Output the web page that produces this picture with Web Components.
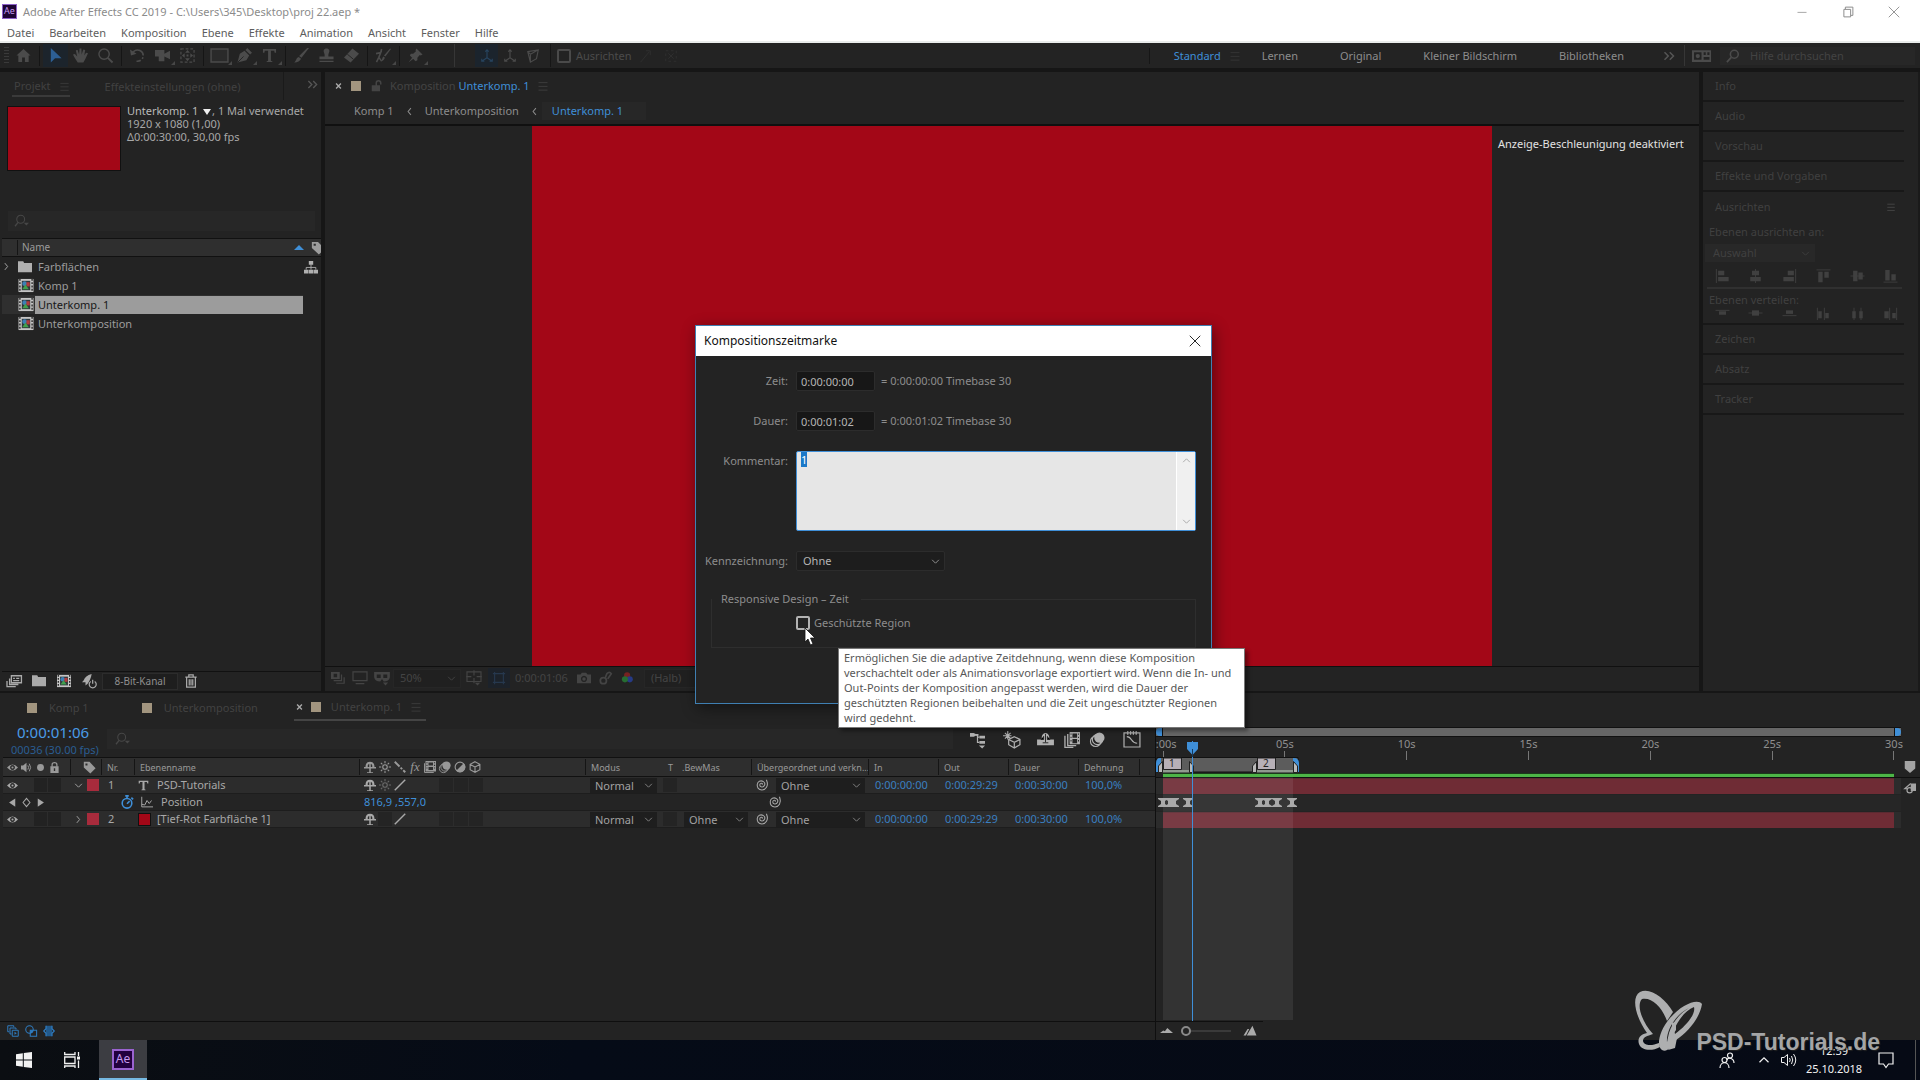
<!DOCTYPE html>
<html lang="de">
<head>
<meta charset="utf-8">
<title>Adobe After Effects CC 2019</title>
<style>
    :root {
        --bg: #232323;
        --edge: #161616;
        --dim: #4b4b4b;
        --text: #9c9c9c;
        --blue: #3f8fd8;
        --red: #a30717;
    }
    html, body { height: 100%; }
    body {
        margin: 0;
        background: var(--edge);
        color: var(--text);
        font: 11px/16px "Noto Sans", "Open Sans", sans-serif;
        overflow: hidden;
    }
</style>
</head>
<body>
<ae-app></ae-app>

<script>
const base = `
    * { box-sizing: border-box; }
    button, input, select, textarea { font: inherit; color: inherit; background: none; border: 0; padding: 0; margin: 0; border-radius: 0; outline: 0; }
    button { display: flex; align-items: center; justify-content: center; }
    a { color: inherit; text-decoration: none; }
    .pick { display: grid; align-items: center; }
    .pick select { grid-area: 1 / 1; appearance: none; width: 100%; height: 100%; }
    .pick ae-icon { grid-area: 1 / 1; justify-self: end; pointer-events: none; }
`;

function define(name, html, ready) {
    const template = document.createElement('template');
    template.innerHTML = html.replace('<style>', '<style>' + base);
    customElements.define(name, class extends HTMLElement {
        constructor() {
            super();
            this.attachShadow({ mode: 'open' });
            this.shadowRoot.appendChild(template.content.cloneNode(true));
        }
        connectedCallback() {
            if (ready) ready(this.shadowRoot, this);
        }
    });
}

/* ---------- icons, all on a 16 x 16 grid ---------- */
const L = 'fill="none" stroke="currentColor"';
const F = 'fill="currentColor"';
const icons = {
    home: `<path ${F} d="M8 1 0.500 8H2.500V15H6.500V10H9.500V15H13.500V8H15.500Z"/>`,
    arrow: `<path ${F} d="M3 0V15.500L7.500 11H14.500Z"/>`,
    hand: `<path ${F} d="M5 15.500 1 9 0 7 2 6.500 4.500 9 3 2.500 5 2 6.500 7 7 0.500H9L9.200 7 11 1.500 13 2 12 8 14 5 16 5.500 13 12 11 15.500Z"/>`,
    zoom: `<circle ${L} stroke-width="1.500" cx="6.500" cy="6.500" r="5.500"/><path ${L} stroke-width="2" d="M10.500 10.500 15.500 15.500"/>`,
    rotate: `<path ${L} stroke-width="1.700" d="M3 5A6 6 0 1 1 7 14" stroke-dasharray="15 2 2 2"/><path ${F} d="M0 1.500 1 8 7 6Z"/>`,
    camera: `<path ${F} d="M0 2H10V6L16 3V12L10 9V14H4V9H0Z"/>`,
    pan: `<path ${L} stroke-width="1.300" stroke-dasharray="3 2" d="M1 1H15V15H1Z"/><path ${F} d="M8 2 10.500 5H5.500ZM8 14 5.500 11H10.500ZM2 8 5 5.500V10.500ZM14 8 11 10.500V5.500ZM7 7H9V9H7Z"/>`,
    rect: `<path fill="#2a2a2a" stroke="currentColor" stroke-width="1.500" d="M-1 1H17V15H-1Z"/>`,
    pen: `<path ${F} d="M0.500 15.500 3 6 8 3 13 8 10 13ZM9 2 11 0 16 5 14 7Z"/><path stroke="#232323" d="M1 15 7 9"/>`,
    type: `<path ${F} d="M1 1H15V5H13.500L13 3H9.500V13.500L11 14V15H5V14L6.500 13.500V3H3L2.500 5H1Z"/>`,
    brush: `<path ${F} d="M16 0 8 10.500 5.500 8.500 14 0ZM5 9.500 7.500 11.500C6.500 14 4 15.500 0 15.500 2.500 14 2 10.500 5 9.500Z"/>`,
    stamp: `<path ${F} d="M6 9C6.500 6 4.500 5 5 2.500 6 0 10 0 11 2.500 11.500 5 9.500 6 10 9H15.500V12H0.500V9ZM0.500 13.500H15.500V15H0.500Z"/>`,
    eraser: `<path ${F} d="M9 0.500 16 6 7 15.500 0 10Z"/><path stroke="#232323" d="M3.500 6.500 10 12"/>`,
    roto: `<path ${F} d="M16 1 10 9 8.500 8 15 0.500ZM8 9 9.500 10.500C8.500 13 7.500 14 5 14.500 6.500 13 6.500 10 8 9Z"/><path ${L} stroke-width="1.700" d="M0 6 5 5 3 10 0.500 15M5 5 6 1M3 10 6 14"/>`,
    pin: `<path ${F} d="M9 0.500 15.500 7 13.500 8 12.500 7.500 10 10.500 10 13 8 14 2 8 3 6 5.500 6 8.500 3.500 8 2.500ZM5 9.500 6.500 11 0.500 15.500Z"/>`,
    axis: `<path ${L} stroke-width="1.300" d="M8 1V10M8 10 2 14M8 10 14 14M6 3 8 1 10 3M2 11V14H5M14 11V14H11"/>`,
    axisview: `<path ${L} stroke-width="1.300" d="M2 3 14 1 12 11 5 15ZM2 3 5 6 14 1M5 6V15"/>`,
    snap: `<path ${L} d="M3 15 13 3M9 2H14V7"/>`,
    snapbox: `<path ${L} stroke-dasharray="3 3" d="M2 2H14V14H2Z"/><path ${L} d="M5 5 11 11M11 5 5 11"/>`,
    menu: `<path ${L} d="M2 3.500H14M2 8.500H14M2 13.500H14"/>`,
    more: `<path ${L} stroke-width="2" d="M2 3 7 8 2 13M9 3 14 8 9 13"/>`,
    search: `<circle ${L} stroke-width="1.800" cx="9.500" cy="6" r="4.500"/><path ${L} stroke-width="2" d="M6 9.500 1 15"/>`,
    find: `<circle ${L} stroke-width="1.200" cx="6.500" cy="6" r="4.500"/><path ${L} stroke-width="1.500" d="M3.500 9.500 0 14"/><path ${F} d="M10 10H16L13 13Z"/>`,
    cards: `<path ${F} fill-rule="evenodd" d="M-1 3H17V14H-1ZM1 5V12H8V5ZM10 5V7.500H12V5ZM13.500 5V7.500H15.500V5ZM10 9.500V12H15.500V9.500Z"/><circle ${F} cx="4.500" cy="8.500" r="2"/>`,
    down: `<path ${L} stroke-width="1.600" d="M2 5 8 11 14 5"/>`,
    up: `<path ${L} stroke-width="1.600" d="M2 11 8 5 14 11"/>`,
    right: `<path ${L} stroke-width="1.600" d="M5 2 10 8 5 14"/>`,
    left: `<path ${L} stroke-width="1.800" d="M10.500 2 5.500 8 10.500 14"/>`,
    cross: `<path ${L} stroke-width="1.200" d="M1 1 15 15M15 1 1 15"/>`,
    smallx: `<path ${L} stroke-width="2" d="M4.500 4.500 11.500 11.500M11.500 4.500 4.500 11.500"/>`,
    minimize: `<path ${L} d="M2 8.500H14"/>`,
    restore: `<path ${L} stroke-width="1.300" d="M2.500 4.500H11.500V14.500H2.500ZM4.500 4V1.500H14.500V12.500H12"/>`,
    lock: `<path ${F} d="M1 7H12V15H1Z"/><path ${L} stroke-width="2" d="M7 8V4A3 3 0 0 1 13 4V6"/>`,
    padlock: `<path ${F} fill-rule="evenodd" d="M2 6H14V16H2ZM7 9V13H9V9Z"/><path ${L} stroke-width="1.800" d="M4.500 7V4A3.500 3 0 0 1 11.500 4V7"/>`,
    folder: `<path ${F} d="M0 1.500H6L7 3.500H16V14H0Z"/>`,
    comp: `<path fill="#c4c4c4" d="M0 1H16V15H0Z"/><path stroke="#2b2b2b" stroke-width="1.500" stroke-dasharray="2 1.500" d="M1.500 1V15M14.500 1V15"/><path fill="#30383b" d="M3.500 3H12.500V13H3.500Z"/><circle fill="#3c7fb5" cx="6.500" cy="6" r="2.500"/><path fill="#b23a3d" d="M8.500 4.500H12V9H8.500Z"/><path fill="#41a04d" d="M7.500 7 11 12H4Z"/>`,
    tag: `<path ${F} fill-rule="evenodd" d="M1 1H8L15.500 9 9 15.500 1 8ZM3 3V5.500H5.500V3Z"/>`,
    tree: `<path ${F} d="M5.500 1H10.500V5.500H5.500ZM0 11H5V15.500H0ZM5.500 11H10.500V15.500H5.500ZM11 11H16V15.500H11Z"/><path ${L} d="M8 5V11M2.500 11V8.500H13.500V11"/>`,
    footage: `<path ${L} stroke-width="1.500" d="M5 2H16.500V10H5ZM3 5V12H13M0 8V14.500H10"/><path ${L} stroke-width="1.500" d="M7 5H9M10.500 5H14M7 7.500H14"/>`,
    rocket: `<path ${F} d="M11 0C6 1 3 4 2 7L0 9.500H4V13L6.500 11C8 9 10.500 5 11 0Z"/><path ${L} stroke-width="1.400" d="M10 8.500A4 4 0 1 0 14.500 8.500M12.200 6.500V11"/>`,
    trash: `<path ${L} stroke-width="1.400" d="M1.500 3.500H14.500M5.500 3V1H10.500V3M3 4V15H13V4M6 6V13M8 6V13M10 6V13"/>`,
    stack: `<path ${F} fill-rule="evenodd" d="M0 1H10V9H0ZM3 3V7H7V3Z"/><path ${L} stroke-width="1.400" d="M12 4V11H3M15 7V14H6"/>`,
    monitor: `<path ${L} stroke-width="1.400" d="M0 1H16V11H0ZM3 14.500H13"/>`,
    mask: `<path ${F} fill-rule="evenodd" d="M-1 1H17V7Q16 12 10 12L8 9 6 12Q0 12-1 7ZM2 4V8H6.500V4ZM9.500 4V8H14V4Z"/><path ${F} d="M9 13H15L12 16.500Z"/>`,
    guides: `<path ${L} stroke-width="1.300" d="M0 1H16V12H0ZM8-1V5M8 8V14M-1 6.500H5M11 6.500H17"/><path ${F} d="M9 13.500H15L12 16.500Z"/>`,
    region: `<path ${L} stroke-width="1.300" d="M3 1V15M13 1V15M1 3H15M1 13H15"/>`,
    photo: `<path ${F} fill-rule="evenodd" d="M0 4H4L5.500 2H10.500L12 4H16V14H0ZM8 5.500A3.500 3.500 0 1 0 8.010 5.500Z"/><circle ${F} cx="8" cy="9" r="2"/>`,
    show: `<circle ${L} stroke-width="2" cx="5" cy="11" r="3.500"/><path ${L} stroke-width="2" d="M7 8 9 3Q12 0 14 3L10 9"/>`,
    rgb: `<circle fill="#722" cx="7" cy="5" r="3.500"/><circle fill="#263a85" cx="10" cy="9.500" r="3.500"/><circle fill="#266d32" cx="4.500" cy="9.500" r="3.500"/>`,
    eye: `<path ${F} fill-rule="evenodd" d="M0 8Q8-1 16 8 8 17 0 8ZM8 4.500A3.500 3.500 0 1 0 8.010 4.500Z"/><circle ${F} cx="8" cy="8" r="1.500"/>`,
    sound: `<path ${F} d="M0 5H3L8 1V15L3 11H0Z"/><path ${L} stroke-width="1.400" d="M10 5Q12 8 10 11M12 2.500Q16 8 12 13.500"/>`,
    dot: `<circle ${F} cx="8" cy="8" r="5"/>`,
    shy: `<path ${F} fill-rule="evenodd" d="M2 8Q2 1 8 1T14 8H16V10H9V15H12V16H4V15H7V10H0V8ZM5 6V8H7V4Q5 4 5 6ZM9 4V8H11V6Q11 4 9 4Z"/>`,
    sun: `<circle ${L} stroke-width="1.500" cx="8" cy="8" r="3"/><path ${L} stroke-width="1.400" d="M8 0V3M8 13V16M0 8H3M13 8H16M2.500 2.500 4.500 4.500M11.500 11.500 13.500 13.500M13.500 2.500 11.500 4.500M4.500 11.500 2.500 13.500"/>`,
    backslash: `<path ${L} stroke-width="2.500" d="M1 1 15 15" stroke-dasharray="9 2 3 2"/>`,
    slash: `<path ${L} stroke-width="2" d="M1 15 15 1"/>`,
    film: `<path ${F} fill-rule="evenodd" d="M2 0H16V14H2ZM6 2V6H12V2ZM6 8V12H12V8ZM3.200 1.500V3H4.700V1.500ZM3.200 5V6.500H4.700V5ZM3.200 8.500V10H4.700V8.500ZM13.300 1.500V3H14.800V1.500ZM13.300 5V6.500H14.800V5ZM13.300 8.500V10H14.800V8.500Z"/><path ${L} stroke-width="1.300" d="M0.700 3V15.300H13"/>`,
    frames: `<path ${F} fill-rule="evenodd" d="M6 0H17V13H6ZM9 1.500V6H14V1.500ZM9 7.500V12H14V7.500ZM7 1.500V3H8V1.500ZM7 5V6.500H8V5ZM7 8.500V10H8V8.500ZM15 1.500V3H16V1.500ZM15 5V6.500H16V5ZM15 8.500V10H16V8.500Z"/><path ${L} stroke-width="1.400" d="M4 2V14.500H13M1 4V16.300H10"/>`,
    blur: `<circle ${F} cx="10" cy="6" r="5.500"/><circle ${L} stroke-width="1.200" cx="8" cy="8" r="5.500"/><circle ${L} stroke-width="1.200" cx="6" cy="10" r="5.500"/>`,
    adjust: `<circle ${L} stroke-width="1.500" cx="8" cy="8" r="6.500"/><path ${F} d="M13 3 3 13A7 7 0 0 0 13 3Z"/>`,
    cube: `<path ${L} stroke-width="1.500" d="M8 1 14.500 4.500V11.500L8 15 1.500 11.500V4.500ZM1.500 4.500 8 8 14.500 4.500M8 8V15"/>`,
    whip: `<path ${L} stroke-width="1.400" d="M8 7.500C10 5 5 5 5 8S10 12 11.500 8 8 1.500 4.500 3 1 10 3 12.500 11 16 14 11 14 3 14 1"/>`,
    watch: `<circle ${L} stroke-width="1.800" cx="8" cy="9.500" r="5.500"/><path ${L} stroke-width="1.800" d="M6 1H10M8 1V4M13 3 15 5M8 10 11 7"/>`,
    graph: `<path ${L} stroke-width="1.300" d="M1 1V14.500H16M1 11 5 12 8 6 11 10 14 6"/>`,
    prev: `<path ${F} d="M12 2V14L3 8Z"/>`,
    next: `<path ${F} d="M4 2V14L13 8Z"/>`,
    diamond: `<path ${L} stroke-width="1.500" d="M8 2 13 8 8 14 3 8Z"/>`,
    flow: `<path ${F} d="M0 1H4L6 2H9V4H6L4 5H0ZM10 4H16V7H10ZM10 9.500H16V12.500H10ZM9.500 14.500H16L13 17.500Z"/><path ${L} stroke-width="1.300" d="M6 3H8V11H10M8 5.500H10"/>`,
    draft: `<path ${L} stroke-width="1.300" d="M11 5 17 8V13.500L11 17 5 13.500V8ZM5 8 11 11 17 8M11 11V17"/><path ${L} stroke-width="1.200" d="M4-1V8M-1 4H8M1 1 7 7M7 1 1 7"/>`,
    hideshy: `<path ${F} d="M-1 8H4V5Q5 1 8 1T12 5V8H17V14H-1Z"/><path stroke="#232323" d="M6 4.500V8H3M10 4.500V8H13M8 2V11M5 11.500H11"/>`,
    grapher: `<path ${L} stroke-width="1.300" d="M0 1H17V16H0ZM3 5C9 5 7 12 14 12M4-1V3M7-1V3M10-1V3M13-1V3"/>`,
    switches: `<path ${L} stroke-width="1.300" d="M1 1H9V3M1 1V9H3M4 4H12V6M4 4V12H6M7 7H15V15H7Z"/><path ${F} d="M10 9 13 11 10 13Z"/>`,
    modes: `<circle ${L} stroke-width="1.400" cx="6" cy="6" r="5"/><path ${L} stroke-width="1.400" d="M7 7H15.500V15H7Z"/><path ${F} d="M7 7H11Q11 11 7 11Z"/>`,
    inout: `<path fill="#225a8c" d="M4 1H12V15H4Z"/><path ${L} stroke-width="1.600" d="M4 1V5L1 8 4 11V15M12 1V5L15 8 12 11V15"/>`,
    shield: `<path ${F} d="M1 0H15V10L8 16 1 10Z"/>`,
    bin: `<path ${F} d="M9 2H16V12H9Z"/><circle ${L} stroke-width="1.600" cx="7.500" cy="11" r="3.500"/><path ${L} stroke-width="1.600" d="M9 2 1 9H5"/>`,
    hillsmall: `<path ${F} d="M0 11 4 8 6 9 9 5 16 11Z"/>`,
    hillbig: `<path ${F} d="M0 14 5 6 7 6 3 14ZM4 14 11 2 16 14Z"/>`,
    win: `<path ${F} d="M0 2.300 6.800 1.300V7.600H0ZM7.800 1.100 16 0V7.600H7.800ZM0 8.600H6.800V14.800L0 13.800ZM7.800 8.600H16V16L7.800 15Z"/>`,
    tasks: `<path ${L} stroke-width="1.300" d="M0.700 5H11V11.500H0.700ZM0.700 0V2.500H11V0M0.700 16V14H11V16M14.500 0V4M14.500 8.500V16"/><path ${F} d="M13 4.500H16V7.500H13Z"/>`,
    people: `<circle ${L} stroke-width="1.200" cx="11" cy="3.500" r="2.500"/><path ${L} stroke-width="1.200" d="M15 11C15 6 9 5 8 8"/><circle ${L} stroke-width="1.200" cx="5.500" cy="8" r="2.500"/><path ${L} stroke-width="1.200" d="M1 16C1 9 10 9 10 16"/>`,
    speaker: `<path ${L} d="M0.500 5.500H3L6.500 2.500V13.500L3 10.500H0.500ZM8.500 6Q10 8 8.500 10M10.500 4Q13 8 10.500 12M12.500 2Q17 8 12.500 14"/>`,
    note: `<path ${L} stroke-width="1.200" d="M1 1H15V12H10.500L8 15.500 5.500 12H1Z"/>`,
    alignl: `<path ${L} d="M1 0V16"/><path ${F} d="M3 2H10V7H3ZM3 9H15V14H3Z"/>`,
    alignc: `<path ${L} d="M8 0V16"/><path ${F} d="M4 2H12V7H4ZM2 9H14V14H2Z"/>`,
    alignr: `<path ${L} d="M15 0V16"/><path ${F} d="M6 2H13V7H6ZM1 9H13V14H1Z"/>`,
    alignt: `<path ${L} d="M0 1H16"/><path ${F} d="M2 3H7V15H2ZM9 3H14V10H9Z"/>`,
    alignm: `<path ${L} d="M0 8H16"/><path ${F} d="M3 2H8V14H3ZM9 4H14V12H9Z"/>`,
    alignb: `<path ${L} d="M0 15H16"/><path ${F} d="M2 1H7V13H2ZM9 6H14V13H9Z"/>`,
    distt: `<path ${L} d="M0 5H16"/><path ${F} d="M4 6H12V10H4Z"/>`,
    distm: `<path ${L} d="M0 8H16"/><path ${F} d="M4 5H12V11H4Z"/>`,
    distb: `<path ${L} d="M0 11H16"/><path ${F} d="M4 5H12V9H4Z"/>`,
    distl: `<path ${L} d="M1 2V16M9 2V16"/><path ${F} d="M2 6H6V14H2ZM10 8H14V14H10Z"/>`,
    distc: `<path ${L} d="M4 2V16M12 2V16"/><path ${F} d="M2 6H6V14H2ZM10 6H14V14H10Z"/>`,
    distr: `<path ${L} d="M7 2V16M15 2V16"/><path ${F} d="M1 6H6V14H1ZM10 8H14V14H10Z"/>`
};

customElements.define('ae-icon', class extends HTMLElement {
    constructor() {
        super();
        this.attachShadow({ mode: 'open' });
    }
    connectedCallback() {
        this.shadowRoot.innerHTML = `
            <style>
                :host { display: block; flex: none; width: 14px; height: 14px; }
                svg { display: block; width: 100%; height: 100%; overflow: visible; }
            </style>
            <svg viewBox="0 0 16 16" aria-hidden="true">${icons[this.getAttribute('name')]}</svg>`;
    }
});

const tool = (name, cls = '') => `<button class="${cls}" aria-label="${name}"><ae-icon name="${name}"></ae-icon></button>`;

/* ---------- product badge ---------- */
define('ae-badge', `
    <style>
        :host { display: block; box-sizing: border-box; width: 15px; height: 15px; border: 1px solid #8d62c9; background: #1d0535; color: #c79cf0; font-size: 9px; line-height: 12px; text-align: center; overflow: hidden; }
        :host([big]) { width: 22px; height: 21px; border: 2px solid #9a63d0; background: #22003f; font-size: 12px; line-height: 16px; }
    </style>Ae`);

/* ---------- window title and menus ---------- */
define('window-bar', `
    <style>
        :host { display: block; background: #fff; color: #8b8b8b; border-bottom: 2px solid #e9eceb; }
        header { display: flex; align-items: center; height: 23px; padding: 0 3px 0 2px; }
        header span { flex: 1; margin-left: 6px; }
        header button { width: 46px; height: 22px; }
        header button ae-icon { width: 12px; height: 12px; }
        nav { display: flex; gap: 15px; padding: 2px 7px 0; color: #5d5d5d; }
    </style>
    <header>
        <ae-badge></ae-badge><span>Adobe After Effects CC 2019 - C:\\Users\\345\\Desktop\\proj 22.aep *</span>
        ${tool('minimize')}${tool('restore')}${tool('cross')}
    </header>
    <nav><a href="#">Datei</a><a href="#">Bearbeiten</a><a href="#">Komposition</a><a href="#">Ebene</a><a href="#">Effekte</a><a href="#">Animation</a><a href="#">Ansicht</a><a href="#">Fenster</a><a href="#">Hilfe</a></nav>`);

/* ---------- tools and workspaces ---------- */
define('tool-bar', `
    <style>
        :host { display: flex; align-items: center; height: 25px; background: var(--bg); color: #4b4b4b; }
        .grip { width: 5px; height: 18px; margin: 0 2px 0 4px; background: repeating-linear-gradient(#3a3a3a 0 1px, transparent 1px 3px); }
        .tools, .axes, .snap { display: flex; align-items: center; }
        .tools button { width: 25px; height: 23px; }
        .tools button ae-icon { width: 15px; height: 15px; }
        .tools i { width: 1px; height: 20px; margin: 0 3px; background: #151515; }
        .tools .on { background: #1c242c; color: #2d5f94; }
        .sub { position: relative; }
        .sub::after { content: ""; position: absolute; right: 0; bottom: 2px; border: 2px solid transparent; border-right-color: #474747; border-bottom-color: #474747; }
        .axes { margin-left: 26px; border-left: 1px solid #363636; padding-left: 20px; }
        .axes button { width: 23px; height: 23px; }
        .axes .on { background: #1b242d; color: #27445f; }
        .snap { margin-left: 6px; padding-left: 6px; border-left: 1px solid #161616; flex: 1; }
        .snap input { appearance: none; width: 14px; height: 14px; border: 2px solid #4a4a4a; border-radius: 2px; margin-right: 5px; }
        .snap button { width: 26px; height: 23px; color: #303030; }
        nav { display: flex; align-items: center; color: #8d8d8d; border-left: 1px solid #161616; padding-left: 24px; }
        nav .on { color: var(--blue); width: 55px; }
        nav ae-icon { width: 12px; height: 12px; color: #3a3a3a; }
        nav a + a { margin-left: 42px; }
        nav ae-icon + a { margin-left: 21px; }
        nav .more { margin: 0 9px 0 39px; width: 12px; color: #555; }
        nav .more ae-icon { color: #555; }
        .sync { width: 20px; height: 21px; border-left: 1px solid #363636; padding-left: 6px; box-sizing: content-box; margin-right: 9px; }
        .sync ae-icon { width: 17px; height: 17px; }
        .search { display: flex; align-items: center; gap: 10px; width: 195px; height: 18px; padding-left: 6px; background: #272727; margin-right: 5px; }
        .search input { width: 140px; }
        .search input::placeholder { color: #434343; opacity: 1; }
    </style>
    <div class="grip"></div>
    <div class="tools">
        ${tool('home')}<i></i>${tool('arrow', 'on')}${tool('hand')}${tool('zoom')}<i></i>
        ${tool('rotate')}${tool('camera', 'sub')}${tool('pan')}<i></i>
        ${tool('rect', 'sub')}${tool('pen', 'sub')}${tool('type', 'sub')}<i></i>
        ${tool('brush')}${tool('stamp')}${tool('eraser')}<i></i>
        ${tool('roto', 'sub')}<i></i>${tool('pin', 'sub')}
    </div>
    <div class="axes">${tool('axis', 'on')}${tool('axis')}${tool('axisview')}</div>
    <div class="snap"><input type="checkbox" id="snap"><label for="snap">Ausrichten</label>${tool('snap')}${tool('snapbox')}</div>
    <nav>
        <a href="#" class="on">Standard</a><ae-icon name="menu"></ae-icon>
        <a href="#">Lernen</a><a href="#">Original</a><a href="#">Kleiner Bildschirm</a><a href="#">Bibliotheken</a>
        ${tool('more', 'more')}
    </nav>
    ${tool('cards', 'sync')}
    <label class="search"><ae-icon name="search"></ae-icon><input type="text" placeholder="Hilfe durchsuchen" aria-label="Hilfe durchsuchen"></label>`);

/* ---------- project panel ---------- */
define('project-panel', `
    <style>
        :host { display: flex; flex-direction: column; background: var(--bg); padding-left: 2px; }
        .tabs { display: flex; align-items: center; height: 28px; color: #414141; white-space: nowrap; }
        .tabs a { padding: 3px 0 1px; }
        .tabs a:first-child { display: flex; align-items: center; gap: 8px; margin-left: 10px; padding-left: 2px; border-bottom: 2px solid #3a3a3a; }
        .tabs a + a { margin-left: 35px; }
        .tabs ae-icon { width: 11px; height: 11px; }
        .tabs .more { margin-left: auto; padding: 0 3px 4px 23px; height: 28px; border-left: 1px solid #1a1a1a; color: #555; }
        .info { display: flex; gap: 6px; padding: 6px 5px; height: 110px; }
        .thumb { width: 114px; height: 65px; background: var(--red); border: 1px solid #111; }
        .info p { margin: -2px 0 0; line-height: 13px; color: #a8a8a8; white-space: nowrap; }
        .info b { font-weight: 400; color: #b9b9b9; }
        .info i { display: inline-block; border: 4px solid transparent; border-top: 6px solid #eee; border-bottom: 0; margin: 0 1px 0 2px; }
        .find { display: flex; align-items: center; gap: 6px; height: 20px; margin: 1px 6px 7px 6px; padding-left: 7px; background: #272727; color: #474747; }
        .head { display: grid; grid-template-columns: 15px 1fr 17px 10px; align-items: center; height: 19px; background: #2f2f2f; border: solid #111; border-width: 1px 0; }
        .head span { border-left: 1px solid #151515; padding-left: 4px; line-height: 15px; font-size: 10px; }
        .head i { border: 5px solid transparent; border-top: 0; border-bottom: 5px solid var(--blue); width: 10px; }
        .head { overflow: hidden; }
        ul { margin: 0; padding: 0; list-style: none; flex: 1; }
        li { display: grid; grid-template-columns: 16px 17px 1fr 17px; height: 19px; align-items: center; }
        li span { padding-left: 3px; line-height: 18px; }
        li > ae-icon:first-child { width: 9px; height: 9px; }
        li ae-icon { color: #b0b0b0; }
        li ae-icon[name=comp] { width: 16px; height: 15px; }
        .on { background: #2f2f2f; margin-right: 18px; grid-template-columns: 16px 17px 1fr; }
        .on span { background: #9c9c9c; color: #171717; }
        footer { display: flex; align-items: center; height: 20px; padding-bottom: 1px; border-top: 1px solid #111; color: #aaa; }
        footer button { width: 25px; }
        footer button:first-child { width: 24px; }
        footer .depth { width: 76px; height: 17px; margin-left: 1px; background: #1e1e1e; border: 1px solid #2c2c2c; font-size: 10px; color: #8f8f8f; }
    </style>
    <div class="tabs"><a href="#">Projekt<ae-icon name="menu"></ae-icon></a><a href="#">Effekteinstellungen (ohne)</a>${tool('more', 'more')}</div>
    <div class="info">
        <div class="thumb"></div>
        <p><b>Unterkomp. 1 <i></i></b>, 1 Mal verwendet<br>1920 x 1080 (1,00)<br>Δ0:00:30:00, 30,00 fps</p>
    </div>
    <div class="find"><ae-icon name="find"></ae-icon><input type="text" aria-label="Projekt durchsuchen"></div>
    <div class="head"><b></b><span>Name</span><i></i><ae-icon name="tag"></ae-icon></div>
    <ul>
        <li><ae-icon name="right"></ae-icon><ae-icon name="folder"></ae-icon><span>Farbflächen</span><ae-icon name="tree"></ae-icon></li>
        <li><b></b><ae-icon name="comp"></ae-icon><span>Komp 1</span></li>
        <li class="on"><b></b><ae-icon name="comp"></ae-icon><span>Unterkomp. 1</span></li>
        <li><b></b><ae-icon name="comp"></ae-icon><span>Unterkomposition</span></li>
    </ul>
    <footer>${tool('footage')}${tool('folder')}${tool('comp')}${tool('rocket')}<button class="depth">8-Bit-Kanal</button>${tool('trash')}</footer>`);

/* ---------- composition viewer ---------- */
define('comp-viewer', `
    <style>
        :host { display: flex; flex-direction: column; background: var(--bg); min-width: 0; }
        .tabs, .path, footer { display: flex; align-items: center; color: #444; }
        .tabs { height: 28px; padding-left: 8px; gap: 7px; }
        .tabs ae-icon { width: 12px; height: 12px; }
        .tabs ae-icon[name=smallx] { color: #aaa; width: 11px; }
        .tabs i { width: 10px; height: 10px; background: #a2957f; }
        .tabs em { font-style: normal; color: var(--blue); }
        .tabs ae-icon[name=lock] { margin: 0 0 0 3px; }
        .path { height: 24px; padding: 0 0 2px 29px; color: #8d8d8d; }
        .path ae-icon { width: 9px; height: 9px; margin: 0 11px; }
        .path .on { width: 104px; margin-left: -8px; padding-left: 10px; line-height: 18px; background: #272727; color: var(--blue); }
        .stage { display: grid; grid-template-columns: 1fr auto 1fr; flex: 1; min-height: 0; border-top: 2px solid #101010; border-bottom: 1px solid #101010; }
        .canvas { grid-column: 2; height: 100%; aspect-ratio: 16 / 9; background: var(--red); }
        .stage p { margin: 10px 0 0 6px; color: #e2e2e2; white-space: nowrap; }
        footer { height: 24px; padding: 0 0 2px 2px; }
        footer button { width: 22px; height: 20px; }
        .pick { width: 68px; height: 19px; margin-right: 2px; background: #202020; border: 1px solid #262626; }
        .pick select { padding-left: 6px; }
        .pick ae-icon { width: 9px; height: 9px; margin-right: 4px; }
        .region { background: #1c222a; color: #26384e; margin: 0 5px 0 3px; }
        .time { width: auto; margin-right: 5px; }
        .res { margin-left: 5px; padding-left: 0; }
    </style>
    <div class="tabs"><ae-icon name="smallx"></ae-icon><i></i><ae-icon name="lock"></ae-icon><a href="#">Komposition <em>Unterkomp. 1</em></a><ae-icon name="menu"></ae-icon></div>
    <div class="path"><a href="#">Komp 1</a><ae-icon name="left"></ae-icon><a href="#">Unterkomposition</a><ae-icon name="left"></ae-icon><a href="#" class="on">Unterkomp. 1</a></div>
    <div class="stage"><div class="canvas"></div><p>Anzeige-Beschleunigung deaktiviert</p></div>
    <footer>
        ${tool('stack')}${tool('monitor')}${tool('mask')}
        <div class="pick"><select aria-label="Vergrößerung"><option>50%</option></select><ae-icon name="down"></ae-icon></div>
        ${tool('guides')}${tool('region', 'region')}<button class="time">0:00:01:06</button>
        ${tool('photo')}${tool('show')}${tool('rgb')}
        <div class="pick res"><select aria-label="Auflösung"><option>(Halb)</option></select><ae-icon name="down"></ae-icon></div>
    </footer>`);

/* ---------- collapsed panels on the right ---------- */
define('side-panels', `
    <style>
        :host { display: block; background: var(--bg); color: #404040; padding-right: 14px; border-right: 2px solid #1a1a1a; }
        h2 { display: flex; align-items: center; justify-content: space-between; margin: 0; height: 30px; padding: 0 8px 0 12px; font: inherit; border-bottom: 2px solid #181818; }
        h2.open { border: 0; }
        h2 ae-icon { width: 10px; height: 10px; color: #555; }
        .align { padding: 2px 0 0; height: 103px; border-bottom: 2px solid #181818; overflow: hidden; }
        .align > span, label { display: block; padding-left: 6px; }
        .pick { width: 110px; height: 18px; margin: 4px 0 6px 2px; background: #282828; }
        .pick select { padding-left: 8px; }
        .pick ae-icon { width: 9px; height: 9px; margin-right: 5px; }
        .row { display: flex; justify-content: space-between; padding: 0 4px 3px 10px; }
        .row button { width: 18px; height: 16px; }
        .row ae-icon { width: 15px; }
        .row + span { border-top: 2px solid #303030; margin: 0 2px 0 4px; padding: 3px 0 0 2px; }
        .row:last-child { margin-top: -3px; }
    </style>
    <h2>Info</h2><h2>Audio</h2><h2>Vorschau</h2><h2>Effekte und Vorgaben</h2>
    <h2 class="open">Ausrichten<ae-icon name="menu"></ae-icon></h2>
    <div class="align">
        <label for="to">Ebenen ausrichten an:</label>
        <div class="pick"><select id="to"><option>Auswahl</option></select><ae-icon name="down"></ae-icon></div>
        <div class="row">${['alignl', 'alignc', 'alignr', 'alignt', 'alignm', 'alignb'].map(n => tool(n)).join('')}</div>
        <span>Ebenen verteilen:</span>
        <div class="row">${['distt', 'distm', 'distb', 'distl', 'distc', 'distr'].map(n => tool(n)).join('')}</div>
    </div>
    <h2>Zeichen</h2><h2>Absatz</h2><h2>Tracker</h2>`);

/* ---------- layer table ---------- */
const drop = (label, value) => `<div class="pick"><select aria-label="${label}"><option>${value}</option></select><ae-icon name="down"></ae-icon></div>`;
const times = '<td class="num">0:00:00:00</td><td class="num">0:00:29:29</td><td class="num">0:00:30:00</td><td class="num">100,0%</td><td></td>';

define('layer-table', `
    <style>
        :host { display: block; padding-left: 3px; }
        table { width: 100%; table-layout: fixed; border-collapse: collapse; }
        th, td { padding: 0; font-weight: 400; text-align: left; height: 17px; line-height: 16px; white-space: nowrap; border-bottom: 1px solid #1d1d1d; }
        thead th { height: 19px; font-size: 9px; line-height: 17px; background: #2e2e2e; border: solid #111; border-width: 1px 0; }
        thead th + th > * { border-left: 1px solid #151515; padding-left: 5px; overflow: hidden; }
        tr { background: #2c2c2c; }
        tr.prop { background: #242424; }
        div { display: flex; align-items: center; height: 16px; color: #a8a8a8; }
        thead div { color: #999; }
        .av { gap: 1px; padding-left: 3px; }
        .av ae-icon { width: 13px; height: 11px; }
        .av i { width: 13px; height: 14px; background: #222; }
        .av u { width: 13px; }
        .lab { justify-content: flex-end; gap: 4px; padding-right: 2px; }
        .lab i { width: 12px; height: 12px; background: #a82b3c; }
        .lab ae-icon { width: 9px; height: 9px; }
        th .lab ae-icon { width: 13px; height: 13px; margin-right: 3px; }
        .name { padding-left: 4px; gap: 8px; }
        .name ae-icon { width: 11px; height: 11px; }
        .name i { width: 13px; height: 13px; background: var(--red); border: 1px solid #111; margin: 0 -2px 0 0; }
        .name.p { padding-left: 7px; }
        .name.p ae-icon { width: 12px; height: 12px; }
        .nr { padding-left: 7px; }
        .w { justify-content: flex-end; color: var(--blue); }
        .sw { padding-left: 4px; gap: 1px; }
        thead th + th > .sw { padding-left: 3px; }
        .sw ae-icon { width: 12px; height: 12px; margin: 0 1px; }
        .sw i { width: 14px; height: 14px; background: #242424; }
        .sw u { width: 30px; }
        .sw .fx { font: italic 13px/14px "Liberation Serif", serif; width: 14px; text-align: center; }
        .dim { opacity: .5; }
        .pick { display: grid; height: 15px; background: #1e1e1e; margin: 0 3px 0 5px; color: #a2a2a2; flex: 1; }
        .pick select { padding-left: 5px; }
        .pick ae-icon { width: 9px; height: 9px; margin-right: 4px; color: #888; }
        .par { padding-left: 5px; }
        .par.p { padding-left: 18px; }
        .par ae-icon[name=whip] { width: 12px; height: 12px; margin-right: 3px; }
        .box { width: 14px; height: 14px; background: #242424; margin-left: 3px; }
        .num { color: #3a7fc0; padding-left: 7px; }
        .pos { color: var(--blue); padding-left: 5px; }
        thead th.t > div { border: 0; padding-left: 8px; }
        thead th.t + th > div { border: 0; padding-left: 3px; }
    </style>
    <table>
        <colgroup><col style="width:67px"><col style="width:31px"><col style="width:33px"><col><col style="width:226px"><col style="width:75px"><col style="width:19px"><col style="width:72px"><col style="width:117px"><col style="width:70px"><col style="width:70px"><col style="width:70px"><col style="width:61px"><col style="width:16px"></colgroup>
        <thead><tr>
            <th><div class="av"><ae-icon name="eye"></ae-icon><ae-icon name="sound"></ae-icon><ae-icon name="dot"></ae-icon><ae-icon name="padlock"></ae-icon></div></th>
            <th><div class="lab"><ae-icon name="tag"></ae-icon></div></th>
            <th><div>Nr.</div></th><th><div>Ebenenname</div></th>
            <th><div class="sw"><ae-icon name="shy"></ae-icon><ae-icon name="sun"></ae-icon><ae-icon name="backslash"></ae-icon><span class="fx">fx</span><ae-icon name="film"></ae-icon><ae-icon name="blur"></ae-icon><ae-icon name="adjust"></ae-icon><ae-icon name="cube"></ae-icon></div></th>
            <th><div>Modus</div></th><th class="t"><div>T</div></th><th><div>.BewMas</div></th>
            <th><div>Übergeordnet und verkn...</div></th><th><div>In</div></th><th><div>Out</div></th><th><div>Dauer</div></th><th><div>Dehnung</div></th><th><div></div></th>
        </tr></thead>
        <tbody>
            <tr>
                <td><div class="av"><ae-icon name="eye"></ae-icon><u></u><i></i><i></i></div></td>
                <td><div class="lab"><ae-icon name="down"></ae-icon><i></i></div></td>
                <td><div class="nr">1</div></td>
                <td><div class="name"><ae-icon name="type"></ae-icon>PSD-Tutorials</div></td>
                <td><div class="sw"><ae-icon name="shy"></ae-icon><ae-icon name="sun" class="dim"></ae-icon><ae-icon name="slash"></ae-icon><u></u><i></i><i></i><i></i></div></td>
                <td><div>${drop('Modus', 'Normal')}</div></td><td><div class="box"></div></td><td></td>
                <td><div class="par"><ae-icon name="whip"></ae-icon>${drop('Übergeordnet', 'Ohne')}</div></td>${times}
            </tr>
            <tr class="prop">
                <td><div class="av"><ae-icon name="prev"></ae-icon><ae-icon name="diamond"></ae-icon><ae-icon name="next"></ae-icon></div></td>
                <td></td><td><div class="w"><ae-icon name="watch"></ae-icon></div></td>
                <td><div class="name p"><ae-icon name="graph"></ae-icon>Position</div></td>
                <td class="pos">816,9 ,557,0</td><td></td><td></td><td></td>
                <td><div class="par p"><ae-icon name="whip"></ae-icon></div></td><td></td><td></td><td></td><td></td><td></td>
            </tr>
            <tr>
                <td><div class="av"><ae-icon name="eye"></ae-icon><u></u><i></i><i></i></div></td>
                <td><div class="lab"><ae-icon name="right"></ae-icon><i></i></div></td>
                <td><div class="nr">2</div></td>
                <td><div class="name"><i></i>[Tief-Rot Farbfläche 1]</div></td>
                <td><div class="sw"><ae-icon name="shy"></ae-icon><i></i><ae-icon name="slash"></ae-icon><u></u><i></i><i></i><i></i></div></td>
                <td><div>${drop('Modus', 'Normal')}</div></td><td><div class="box"></div></td><td><div>${drop('Bewegte Maske', 'Ohne')}</div></td>
                <td><div class="par"><ae-icon name="whip"></ae-icon>${drop('Übergeordnet', 'Ohne')}</div></td>${times}
            </tr>
        </tbody>
    </table>`);

/* ---------- time ruler, bars and keyframes ---------- */
define('time-lanes', `
    <style>
        :host { display: flex; flex-direction: column; position: relative; padding-top: 6px; border-left: 1px solid #0f0f0f; overflow: hidden; }
        .track { margin: 0 26px 0 7px; }
        .work { height: 10px; margin: 0 19px 0 0; background: #666; border: solid #111; border-width: 1px 0; display: flex; justify-content: space-between; }
        .work i { width: 7px; background: var(--blue); border-radius: 5px 0 0 5px; border-right: 1px solid #111; }
        .work i + i { border-radius: 0 5px 5px 0; border: 0; border-left: 1px solid #111; }
        .marks { display: flex; justify-content: space-between; height: 20px; }
        .marks span { display: flex; flex-direction: column; align-items: center; width: 0; height: 22px; line-height: 14px; color: #8f8f8f; }
        .marks span::after { content: ""; width: 1px; height: 9px; flex: none; background: #777; }
        .markers { height: 16px; }
        .markers svg { display: block; overflow: visible; }
        .green { height: 4px; background: #4db547; border-top: 1px solid #1a3a1a; }
        .rows { border-top: 1px solid #0f0f0f; }
        .rows div { height: 16px; margin-bottom: 1px; margin-right: 19px; padding-left: 7px; background: #2c2c2c; }
        .rows div i { display: block; height: 16px; margin-right: 7px; background: #6f2c35; border-top: 1px solid #5b2a31; }
        .rows .keys { background: #262626; }
        .area { position: absolute; left: 7px; right: 26px; top: 52px; bottom: 20px; pointer-events: none; }
        .area b { position: absolute; left: 0; width: 17.8%; top: 4px; bottom: 0; background: rgba(255, 255, 255, .075); }
        .area svg { position: absolute; top: 25px; width: 10px; height: 9px; margin-left: -5px; fill: #a9a9a9; }
        .head { position: absolute; left: 36px; top: 20px; bottom: 19px; width: 1px; background: var(--blue); }
        .head svg { position: absolute; left: -5px; top: 0; }
        .side { position: absolute; right: 3px; top: 38px; display: grid; gap: 6px; color: #a4a4a4; }
        .side button { width: 14px; height: 15px; }
        .side ae-icon { width: 12px; height: 14px; }
        footer { display: flex; align-items: center; gap: 3px; height: 19px; margin-top: auto; color: #aaa; padding-left: 4px; }
        footer::before { content: ""; position: absolute; left: 0; width: 107px; bottom: 18px; border-top: 1px solid #0f0f0f; }
        footer ae-icon { width: 13px; height: 13px; }
        footer input { appearance: none; width: 50px; height: 10px; margin: 0 8px 0 5px; background: linear-gradient(#3a3a3a, #3a3a3a) center / 100% 2px no-repeat; }
        footer input::-webkit-slider-thumb { appearance: none; width: 10px; height: 10px; border: 2px solid #8a8a8a; border-radius: 50%; background: #232323; }
        footer ae-icon:last-child { width: 16px; }
    </style>
    <div class="work"><i></i><i></i></div>
    <div class="track marks"><span>0:00s</span><span>05s</span><span>10s</span><span>15s</span><span>20s</span><span>25s</span><span>30s</span></div>
    <div class="markers">
        <svg width="144" height="16">
            <path fill="#5c5c5c" stroke="#111" d="M1 .5H142V15H1Z"/>
            <path fill="#3f8fd8" d="M0 15V6Q0 1 5 1V6L2 15ZM143 15V6Q143 1 137 1V6L141 15Z"/>
            <path fill="#b7b0b7" stroke="#222" d="M7.500 1H25.500V12.500H7.500ZM101.500 1H119.500V12.500H101.500Z"/>
            <path fill="#8f9a8f" d="M7 13H34V15.500H7ZM101 13H137V15.500H101Z"/>
            <path fill="#b9b9b9" stroke="#222" d="M2.500 15.500V9L6.500 4.500V15.500ZM37.500 15.500V9L33.500 4.500V15.500ZM96.500 15.500V9L100.500 4.500V15.500ZM141.500 15.500V9L137.500 4.500V15.500Z"/>
            <text x="13" y="10" font-size="10" fill="#222">1</text><text x="107" y="10" font-size="10" fill="#222">2</text>
        </svg>
    </div>
    <div class="track green"></div>
    <div class="rows"><div><i></i></div><div class="keys"></div><div><i></i></div></div>
    <div class="area"><b></b></div>
    <div class="head"><svg width="12" height="16"><path fill="#3f8fd8" d="M0 1H11V8L5.500 14 0 8Z"/><path stroke="#173a5c" d="M5.500 8V16"/></svg></div>
    <div class="side">${tool('shield')}${tool('bin')}</div>
    <footer><ae-icon name="hillsmall"></ae-icon><input type="range" aria-label="Zeitzoom" min="0" max="100" value="0"><ae-icon name="hillbig"></ae-icon></footer>`,
    root => {
        // hourglass keyframes, in percent of the thirty seconds
        const area = root.querySelector('.area');
        for (const at of [0, 1, 1.500, 3.400, 13.300, 14.200, 15.600, 17.700]) {
            area.insertAdjacentHTML('beforeend', `<svg viewBox="0 0 10 9" style="left:${at}%"><path d="M0 0H10V1L7 3V6L10 8V9H0V8L3 6V3L0 1Z"/></svg>`);
        }
    });

/* ---------- timeline ---------- */
define('timeline-panel', `
    <style>
        :host { display: flex; flex-direction: column; background: var(--bg); }
        .tabs { display: flex; align-items: center; height: 28px; padding: 2px 0 0 27px; color: #424242; }
        .tabs a { display: flex; align-items: center; gap: 12px; margin-right: 53px; height: 22px; }
        .tabs a i { width: 10px; height: 10px; background: #a2957f; }
        .tabs .on { gap: 8px; margin: 3px 0 0 -17px; padding: 0 4px 3px 0; border-bottom: 2px solid #444; height: 22px; }
        .tabs .on i { margin-right: 2px; }
        .tabs ae-icon { width: 12px; height: 12px; }
        .tabs ae-icon[name=smallx] { color: #aaa; width: 11px; margin-right: -2px; }
        .cols { display: grid; grid-template-columns: 1155px 1fr; flex: 1; }
        .left { display: flex; flex-direction: column; min-width: 0; }
        .tools { display: flex; height: 36px; align-items: center; }
        .time { width: 104px; padding: 1px 0 0 11px; color: #2a5d92; line-height: 15px; height: 36px; }
        .time b { display: block; padding-left: 6px; font-size: 15px; font-weight: 400; line-height: 20px; color: #4a9be6; }
        .find { display: flex; align-items: center; flex: 1; height: 20px; padding-left: 9px; margin-left: 3px; background: #272727; color: #474747; }
        .sw { display: flex; gap: 8px; padding: 0 11px; color: #b0b0b0; }
        .sw button { width: 26px; height: 20px; }
        .sw button:nth-child(4), .sw button:nth-child(5) { margin-left: -8px; }
        .sw ae-icon { width: 15px; height: 15px; }
        footer { display: flex; align-items: center; gap: 2px; height: 19px; margin-top: auto; padding-left: 5px; border-top: 1px solid #0f0f0f; color: #2f7cc0; }
        footer button { width: 16px; }
        footer ae-icon { width: 12px; height: 12px; }
    </style>
    <div class="tabs">
        <a href="#"><i></i>Komp 1</a><a href="#"><i></i>Unterkomposition</a>
        <a href="#" class="on"><ae-icon name="smallx"></ae-icon><i></i>Unterkomp. 1<ae-icon name="menu"></ae-icon></a>
    </div>
    <div class="cols">
        <div class="left">
            <div class="tools">
                <div class="time"><b>0:00:01:06</b>00036 (30.00 fps)</div>
                <div class="find"><ae-icon name="find"></ae-icon><input type="text" aria-label="Ebenen durchsuchen"></div>
                <div class="sw">${['flow', 'draft', 'hideshy', 'frames', 'blur', 'grapher'].map(n => tool(n)).join('')}</div>
            </div>
            <layer-table></layer-table>
            <footer>${tool('switches')}${tool('modes')}${tool('inout')}</footer>
        </div>
        <time-lanes></time-lanes>
    </div>`);

/* ---------- marker dialog ---------- */
define('marker-dialog', `
    <style>
        :host { display: block; box-sizing: border-box; width: 517px; height: 379px; border: 1px solid #3f7fb2; background: var(--bg); box-shadow: 2px 4px 14px rgba(0, 0, 0, .45); color: #8d8d8d; }
        header { display: flex; align-items: center; justify-content: space-between; height: 30px; padding: 0 0 0 8px; background: #fff; color: #111; font-size: 12px; }
        header button { width: 32px; height: 30px; }
        header ae-icon { width: 12px; height: 12px; }
        form { display: grid; grid-template-columns: 84px 1fr; column-gap: 8px; padding: 15px 15px 0 8px; }
        form > label { text-align: right; line-height: 20px; }
        .time { display: flex; align-items: center; gap: 6px; height: 40px; padding-bottom: 20px; white-space: pre; }
        .time input, .pick { width: 79px; height: 20px; padding-left: 4px; background: #171717; border: 1px solid #2c2c2c; border-radius: 2px; color: #b5b5b5; }
        .comment { display: flex; height: 80px; margin-bottom: 20px; border: 1px solid #3f8fd8; border-radius: 2px; background: #e6e6e6; }
        textarea { flex: 1; min-width: 0; resize: none; padding: 0 4px; line-height: 15px; color: #222; overflow: hidden; }
        textarea::selection { background: #1b78c8; color: #fff; }
        .bar { display: flex; flex-direction: column; justify-content: space-between; align-items: center; width: 19px; padding: 4px 0; background: #f0f0f0; border-left: 1px solid #fff; color: #a5a5a5; }
        .bar ae-icon { width: 9px; height: 9px; }
        .pick { width: 149px; padding: 0; background: #1d1d1d; }
        .pick select { padding-left: 6px; }
        .pick ae-icon { width: 9px; height: 9px; margin-right: 4px; color: #9a9a9a; }
        fieldset { grid-column: 1 / -1; min-width: 0; height: 57px; margin: 20px 0 0 7px; padding: 8px 0 0 84px; border: 1px solid #2e2e2e; }
        legend { margin-left: -84px; padding: 0 12px 0 9px; line-height: 16px; }
        fieldset label { display: flex; align-items: center; gap: 4px; line-height: 16px; }
        fieldset input { appearance: none; width: 14px; height: 14px; border: 2px solid #b2b2b2; border-radius: 2px; }
    </style>
    <header>Kompositionszeitmarke${tool('cross')}</header>
    <form>
        <label for="at">Zeit:</label><div class="time"><input id="at" type="text" value="0:00:00:00">= 0:00:00:00 Timebase 30</div>
        <label for="len">Dauer:</label><div class="time"><input id="len" type="text" value="0:00:01:02">= 0:00:01:02 Timebase 30</div>
        <label for="note">Kommentar:</label>
        <div class="comment"><textarea id="note">1</textarea><div class="bar"><ae-icon name="up"></ae-icon><ae-icon name="down"></ae-icon></div></div>
        <label for="tag">Kennzeichnung:</label><div class="pick"><select id="tag"><option>Ohne</option></select><ae-icon name="down"></ae-icon></div>
        <fieldset><legend>Responsive Design – Zeit</legend><label><input type="checkbox">Geschützte Region</label></fieldset>
    </form>`,
    root => {
        const note = root.querySelector('textarea');
        note.focus();
        note.select();
    });

define('help-tip', `
    <style>
        :host { display: block; box-sizing: border-box; padding: 1px 5px 2px; background: #fff; border: 1px solid #777; color: #575757; line-height: 15px; box-shadow: 3px 3px 4px rgba(0, 0, 0, .4); }
    </style><slot></slot>`);

/* ---------- butterfly watermark ---------- */
define('site-mark', `
    <style>
        :host { display: flex; align-items: flex-end; color: #a4a5a6; font: bold 23px/22px "Liberation Sans", Arial, sans-serif; text-shadow: 1px 1px 1px #222; }
        svg { display: block; margin-right: -8px; }
    </style>
    <svg width="70" height="63" viewBox="0 0 70 63" fill="#aeafb0" fill-rule="evenodd">
        <path d="M6 2C16-3 31 8 39 22L33 31C28 17 18 7 8 9 2 15 8 32 19 44 13 46 9 47 9 51 10 56 18 56 25 53L26 57C17 62 7 60 5 54 3 48 7 44 13 43 3 29-4 8 6 2Z"/>
        <path d="M68 14C64 8 48 14 36 28 25 41 22 56 28 60 33 63 38 56 42 50 54 42 66 28 68 14ZM60 17C62 24 52 36 41 44L40 40C44 30 52 20 60 17ZM55 18C45 24 38 33 35 43L33 52C32 40 42 24 55 18Z"/>
        <path d="M38 33 42 32 42 40 38 46ZM40 50 43 48 41 58 34 60Z"/>
    </svg><span>PSD-Tutorials.de</span>`);

/* ---------- taskbar ---------- */
define('task-bar', `
    <style>
        :host { display: flex; align-items: stretch; height: 40px; background: linear-gradient(90deg, #0b0e12, #050b17 30%, #060a15); color: #f2f2f2; padding-right: 4px; }
        button { width: 48px; }
        button ae-icon { width: 16px; height: 16px; }
        .app { margin-left: 3px; background: #3c3d42; border-bottom: 2px solid #76b9e2; padding-top: 1px; }
        .tray { display: flex; align-items: center; margin-left: auto; }
        .tray button { width: 25px; }
        .tray .people { width: 45px; margin-right: 2px; }
        .tray ae-icon[name=up] { width: 12px; height: 14px; }
        .clock { width: 66px; line-height: 18px; text-align: center; }
        .tray .note { width: 49px; height: 40px; border-right: 1px solid #555; padding-right: 10px; }
    </style>
    ${tool('win')}${tool('tasks')}<button class="app" aria-label="After Effects"><ae-badge big></ae-badge></button>
    <div class="tray">${tool('people', 'people')}${tool('up')}${tool('speaker')}<time class="clock">12:39<br>25.10.2018</time>${tool('note', 'note')}</div>`);

/* ---------- desktop ---------- */
define('ae-app', `
    <style>
        :host { display: grid; grid-template-rows: auto auto 1fr 347px 40px; height: 100vh; position: relative; }
        .panels { display: grid; grid-template-columns: 321px 1fr 217px; gap: 4px; padding: 4px 0 2px; min-height: 0; }
        marker-dialog { position: absolute; left: 695px; top: 325px; }
        help-tip { position: absolute; left: 838px; top: 648px; width: 407px; }
        site-mark { position: absolute; right: 40px; bottom: 27px; }
        .pointer { position: absolute; left: 804px; top: 627px; }
        task-bar { min-width: 0; }
    </style>
    <window-bar></window-bar>
    <tool-bar></tool-bar>
    <div class="panels"><project-panel></project-panel><comp-viewer></comp-viewer><side-panels></side-panels></div>
    <timeline-panel></timeline-panel>
    <task-bar></task-bar>
    <site-mark></site-mark>
    <marker-dialog></marker-dialog>
    <help-tip>Ermöglichen Sie die adaptive Zeitdehnung, wenn diese Komposition verschachtelt oder als Animationsvorlage exportiert wird. Wenn die In- und Out-Points der Komposition angepasst werden, wird die Dauer der geschützten Regionen beibehalten und die Zeit ungeschützter Regionen wird gedehnt.</help-tip>
    <svg class="pointer" width="13" height="20"><path fill="#fff" stroke="#111" stroke-width=".8" d="M1 1V15L4 12 6.500 18 9 17 6.500 11H11Z"/></svg>`);
</script>
</body>
</html>
